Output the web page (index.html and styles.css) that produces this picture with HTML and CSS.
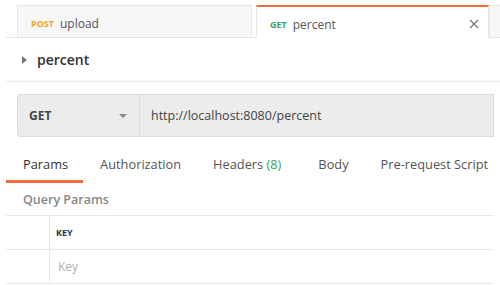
FILE: index.html
```html
<!DOCTYPE html>
<html lang="en">
<head>
    <meta charset="UTF-8">
    <title>percent</title>
    <link rel="stylesheet" href="styles.css">
</head>
<body>

<div class="page">
  <!-- Onglets des requetes -->
  <div class="tab-bar">
    <div class="tab">
      <span class="method post">POST</span>
      <span class="tab-name">upload</span>
    </div>
    <div class="tab active">
      <span class="method get">GET</span>
      <span class="tab-name">percent</span>
      <svg class="close" width="10" height="10" viewBox="0 0 10 10">
        <path d="M1 1 L9 9 M9 1 L1 9" stroke="#777" stroke-width="1.3" fill="none"/>
      </svg>
    </div>
    <div class="tab rest"></div>
  </div>

  <div class="title">
    <span class="caret"></span>
    <span>percent</span>
  </div>

  <div class="request">
    <div class="method-select">
      <span>GET</span>
      <span class="drop"></span>
    </div>
    <div class="url">http://localhost:8080/percent</div>
  </div>

  <div class="sub-tabs">
    <div class="sub-tab selected">Params</div>
    <div class="sub-tab">Authorization</div>
    <div class="sub-tab headers">Headers <span class="count">(8)</span></div>
    <div class="sub-tab">Body</div>
    <div class="sub-tab">Pre-request Script</div>
  </div>

  <div class="section-label">Query Params</div>

  <div class="params">
    <div class="row head">
      <div class="check"></div>
      <div class="cell">KEY</div>
    </div>
    <div class="row">
      <div class="check"></div>
      <div class="cell placeholder">Key</div>
    </div>
  </div>
</div>

</body>
</html>
```

FILE: styles.css
```css
body {
    margin: 0;
    font-family: 'Open Sans', Arial, sans-serif;
    background: #fff;
    color: #505050;
    overflow: hidden;
}
.page {
    padding-left: 6px;
    width: 500px;
    box-sizing: border-box;
    overflow: hidden;
}
.tab-bar {
    display: flex;
    align-items: flex-end;
    height: 38px;
    padding-left: 11px;
    border-bottom: 1px solid #e6e6e6;
    box-sizing: border-box;
}
.tab {
    display: flex;
    align-items: center;
    flex-shrink: 0;
    box-sizing: border-box;
    width: 235px;
    height: 32px;
    padding: 3px 0 0 13px;
    background: #f7f7f7;
    border: 1px solid #e8e8e8;
    border-bottom: none;
    margin-right: 4px;
}
.tab.active {
    width: 233px;
    background: #fff;
    border-top: 2px solid #ef6c3b;
    padding-left: 13px;
    margin-right: 0;
    position: relative;
    top: 1px;
    height: 33px;
}
.tab.rest {
    width: 40px;
}
.method {
    font-size: 9px;
    font-weight: 700;
    margin-right: 6px;
}
.post {
    color: #f5a623;
}
.get {
    color: #3ea35a;
}
.tab-name {
    font-size: 12px;
    color: #555;
}
.close {
    margin-left: auto;
    margin-right: 9px;
}
.title {
    display: flex;
    align-items: center;
    height: 43px;
    padding-left: 16px;
    font-size: 14px;
    font-weight: 600;
    color: #333;
    border-bottom: 1px solid #ececec;
}
.caret {
    width: 0;
    height: 0;
    border-top: 4px solid transparent;
    border-bottom: 4px solid transparent;
    border-left: 5px solid #777;
    margin-right: 10px;
}
.request {
    display: flex;
    margin: 12px 0 0 11px;
    height: 43px;
}
.method-select {
    display: flex;
    align-items: center;
    justify-content: space-between;
    flex-shrink: 0;
    box-sizing: border-box;
    width: 123px;
    padding: 0 12px 0 11px;
    background: #ececec;
    border: 1px solid #dcdcdc;
    border-radius: 3px 0 0 3px;
    font-size: 12px;
    font-weight: 700;
    color: #444;
}
.drop {
    width: 0;
    height: 0;
    border-left: 4px solid transparent;
    border-right: 4px solid transparent;
    border-top: 4px solid #888;
}
.url {
    display: flex;
    align-items: center;
    width: 354px;
    flex-shrink: 0;
    padding-left: 11px;
    box-sizing: border-box;
    background: #ececec;
    border: 1px solid #dcdcdc;
    border-left: none;
    font-size: 12.5px;
    color: #444;
}
.sub-tabs {
    display: flex;
    margin-top: 13px;
}
.sub-tab {
    flex-shrink: 0;
    font-size: 12.8px;
    color: #555;
    padding: 5px 15px 7px 17px;
    border-bottom: 3px solid transparent;
}
.sub-tab.headers {
    padding-right: 20px;
}
.sub-tab.selected {
    color: #333;
    border-bottom-color: #ef6c3b;
}
.count {
    color: #3ea35a;
}
.section-label {
    font-size: 12.5px;
    font-weight: 600;
    color: #888;
    padding: 8px 0 0 17px;
    height: 32px;
    box-sizing: border-box;
}
.params {
    border-top: 1px solid #e8e8e8;
    width: 488px;
}
.row {
    display: flex;
    height: 33px;
    border-bottom: 1px solid #e8e8e8;
}
.check {
    width: 43px;
    border-right: 1px solid #e8e8e8;
}
.cell {
    display: flex;
    align-items: center;
    padding-left: 6px;
    font-size: 12px;
}
.head .cell {
    font-size: 9px;
    font-weight: 700;
    color: #333;
}
.placeholder {
    color: #b0b0b0;
    padding-left: 8px;
}
```
